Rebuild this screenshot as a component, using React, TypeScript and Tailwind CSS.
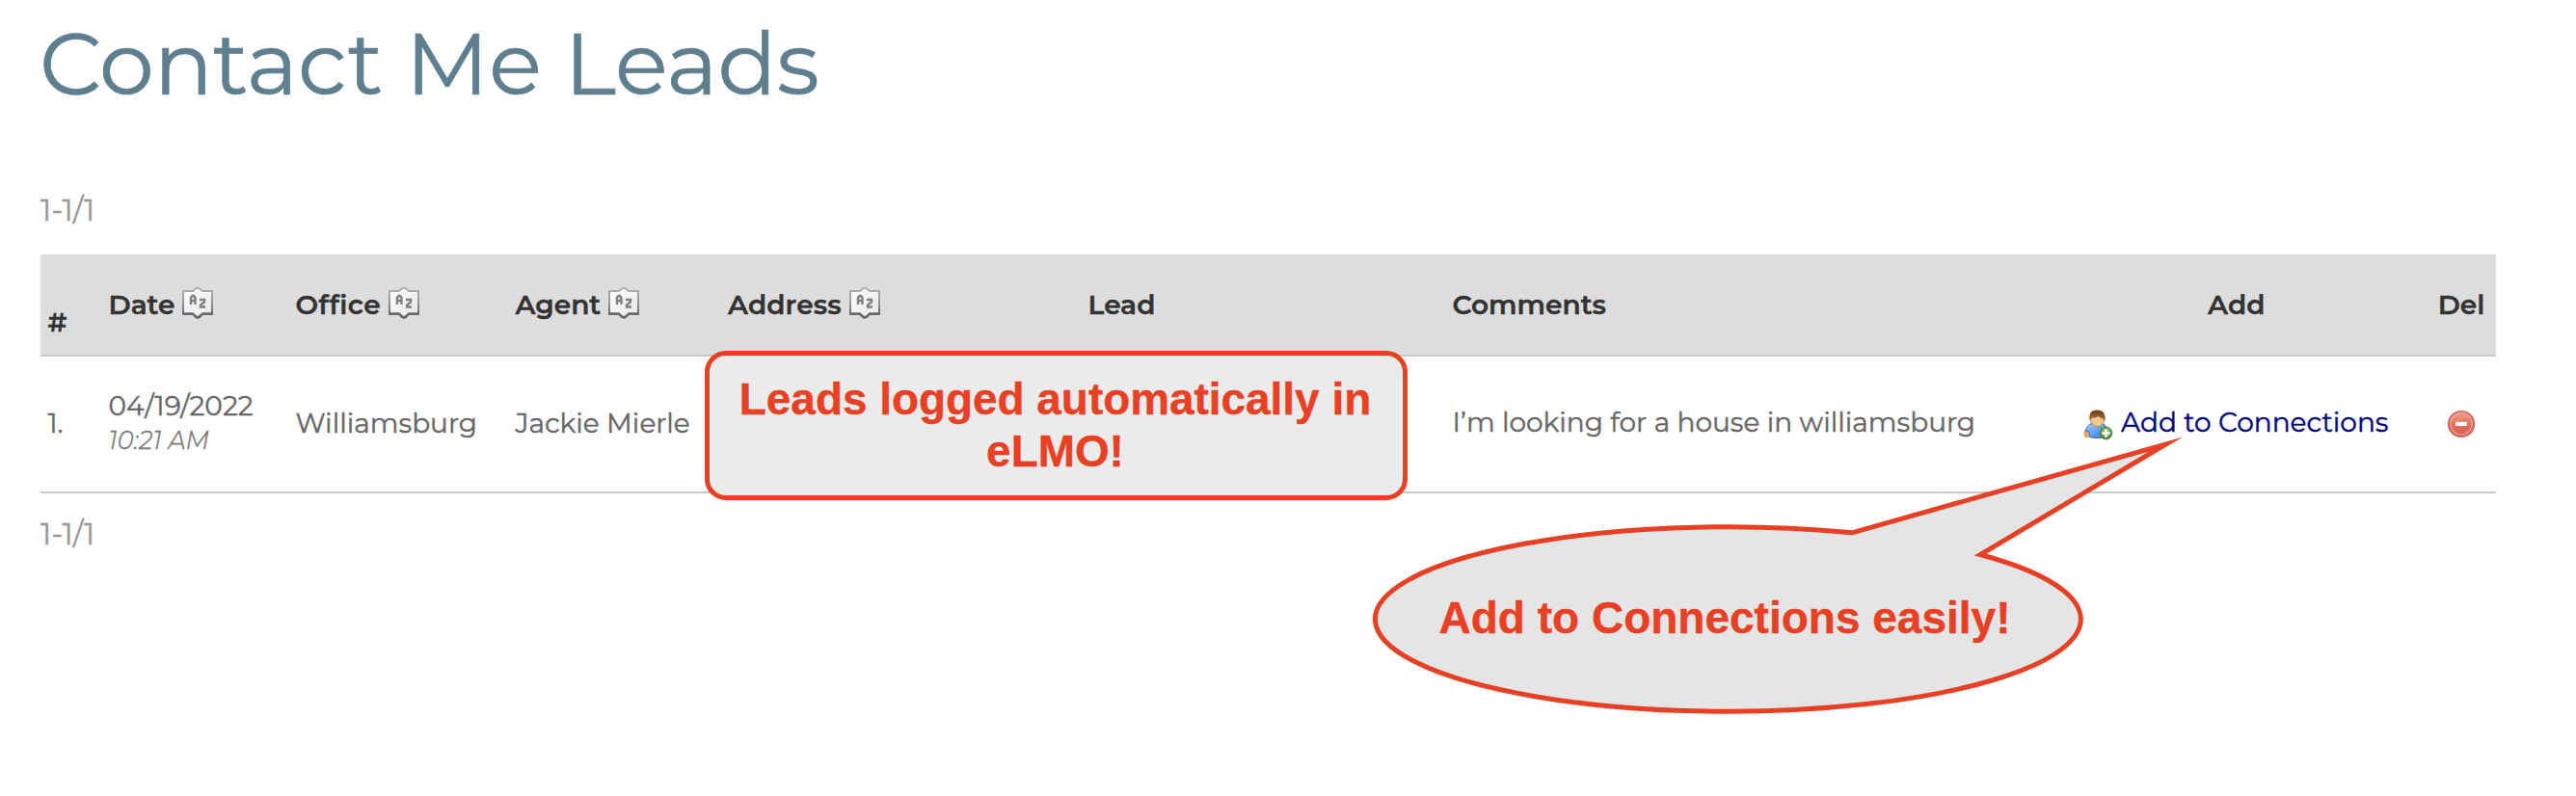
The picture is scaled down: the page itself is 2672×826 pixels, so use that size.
import React from "react";

function SortIcon() {
  return (
    <svg width="32" height="34" viewBox="0 0 32 34" className="ml-2 mt-[2px] block shrink-0">
      <defs>
        <linearGradient id="sortEdge" x1="0" y1="0" x2="0" y2="1">
          <stop offset="0" stopColor="#b0b0b0" />
          <stop offset="0.5" stopColor="#969696" />
          <stop offset="1" stopColor="#5c5c5c" />
        </linearGradient>
        <linearGradient id="sortFill" x1="0" y1="0" x2="1" y2="1">
          <stop offset="0" stopColor="#ffffff" />
          <stop offset="1" stopColor="#e6e6e6" />
        </linearGradient>
      </defs>
      <path
        d="M1 4H11L14 1.5Q16 0 18 1.5L21 4H31V28H21L18 31Q16 32.5 14 31L11 28H1Z"
        fill="url(#sortFill)"
        stroke="url(#sortEdge)"
        strokeWidth="2"
      />
      <path d="M2 27H11L14 29.8Q16 31.2 18 29.8L21 27H30" fill="none" stroke="#6a6a6a" strokeWidth="1.5" />
      <path d="M9 18V11L10.5 9H12L13.5 11V18M9 14H13.5" fill="none" stroke="#808080" strokeWidth="2.4" />
      <path d="M18 13H23V15.5L19 18.5V20.5H24" fill="none" stroke="#808080" strokeWidth="2.4" />
    </svg>
  );
}

function UserAddIcon() {
  return (
    <svg width="32" height="32" viewBox="0 0 32 32" className="mr-[7px] block shrink-0">
      <defs>
        <linearGradient id="shirt" x1="0" y1="0" x2="1" y2="1">
          <stop offset="0" stopColor="#a9cdfb" />
          <stop offset="0.55" stopColor="#5c9bee" />
          <stop offset="1" stopColor="#3a6fca" />
        </linearGradient>
        <linearGradient id="hair" x1="0" y1="0" x2="0" y2="1">
          <stop offset="0" stopColor="#6e4019" />
          <stop offset="1" stopColor="#a8703a" />
        </linearGradient>
        <radialGradient id="plus" cx="0.5" cy="0.35" r="0.7">
          <stop offset="0" stopColor="#a5cf85" />
          <stop offset="0.6" stopColor="#68a048" />
          <stop offset="1" stopColor="#3d7424" />
        </radialGradient>
      </defs>
      <ellipse cx="3.5" cy="25" rx="3" ry="4.2" fill="#e5a55f" />
      <path d="M2 22Q4 15.5 9 14.5H19Q25 16 26 23V27Q21 30.500 14 29.500Q8 29.500 6.500 28.500L6 23Z" fill="url(#shirt)" stroke="#4674c6" strokeWidth="1" />
      <ellipse cx="14.500" cy="11" rx="6.800" ry="6.800" fill="#f0c796" stroke="#b98046" strokeWidth="1" />
      <path d="M6.500 11Q5.500 3.500 9.500 1.500Q14.500 -0.500 19 1.500Q23.500 4 22.500 12L20.500 9.500Q17.500 8.500 15.500 7Q12.500 9 9 8.500Z" fill="url(#hair)" />
      <circle cx="23.500" cy="24.500" r="6.300" fill="url(#plus)" stroke="#4b8232" strokeWidth="1" />
      <path d="M23.500 20.500V28.500M19.500 24.500H27.500" stroke="#ffffff" strokeWidth="2.600" />
    </svg>
  );
}

function DeleteIcon() {
  return (
    <svg width="30" height="30" viewBox="0 0 30 30" className="block shrink-0">
      <defs>
        <linearGradient id="del" x1="0" y1="0" x2="0" y2="1">
          <stop offset="0" stopColor="#eea58c" />
          <stop offset="0.5" stopColor="#e0705a" />
          <stop offset="1" stopColor="#d8584c" />
        </linearGradient>
      </defs>
      <circle cx="15" cy="15" r="13.300" fill="url(#del)" stroke="#d0675f" strokeWidth="1.600" />
      <circle cx="15" cy="15" r="11" fill="none" stroke="#eda698" strokeWidth="1.200" />
      <rect x="9" y="12.800" width="12" height="4.200" fill="#ffffff" />
    </svg>
  );
}

const columns =
  "grid grid-cols-[63px_194px_228px_220.5px_373.5px_378px_615px_395.5px_72px] w-[2547px] pl-[7.5px] text-[28px] leading-[40px] border-b-2 border-[#c9c9c9]";

function SortHead({ label, className = "" }: { label: string; className?: string }) {
  return (
    <div className="flex items-start">
      <span className={className}>{label}</span>
      <SortIcon />
    </div>
  );
}

function Count({ className }: { className: string }) {
  return <div className={`text-[31.5px] leading-[40px] tracking-[-0.2px] text-[#999] ${className}`}>1-1/1</div>;
}

export default function App() {
  return (
    <div className="relative h-[826px] w-[2672px] overflow-hidden bg-white font-['Montserrat','Inter',sans-serif] [font-variant-ligatures:none] [-webkit-text-stroke-width:0.4px]">
      <main className="pl-[42px] pt-4">
        <h1 className="-ml-px text-[90.4px] leading-[100px] text-[#5f7f8f] [-webkit-text-stroke-width:0.7px]">Contact Me Leads</h1>
        <Count className="mt-[82px]" />

        <div className="mt-[26px]">
          <div className={`${columns} h-[106px] bg-[#ddd] pt-8 font-semibold text-[#333]`}>
            <div className="pt-[18px]">#</div>
            <SortHead label="Date" />
            <SortHead label="Office" className="tracking-[0.45px]" />
            <SortHead label="Agent" />
            <SortHead label="Address" className="tracking-[0.1px]" />
            <div>Lead</div>
            <div>Comments</div>
            <div className="pl-px text-center">Add</div>
            <div className="text-center">Del</div>
          </div>

          <div className={`${columns} h-[142px] pt-[49px] text-[#666]`}>
            <div>1.</div>
            <div className="-mt-[18px]">
              <div>04/19/2022</div>
              <div className="text-[25.6px] font-light italic leading-[32px] tracking-[0.15px] text-[#777]">10:21 AM</div>
            </div>
            <div>Williamsburg</div>
            <div>Jackie Mierle</div>
            <div />
            <div />
            <div className="-mt-px whitespace-nowrap">I’m looking for a house in williamsburg</div>
            <div className="-mt-px flex items-start justify-center text-[#000080]">
              <div className="mt-[7px]">
                <UserAddIcon />
              </div>
              <span>Add to Connections</span>
            </div>
            <div className="mt-[6px] flex items-start justify-center">
              <DeleteIcon />
            </div>
          </div>
        </div>

        <Count className="mt-[22px]" />
      </main>

      <div className="absolute left-[731px] top-[364px] h-[155px] w-[729px] rounded-[22px] border-[5px] border-[#e84025] bg-[#ebebeb] pr-[2px] pt-[17.5px] text-center font-['Liberation_Sans',Arial,sans-serif] text-[45.9px] font-bold leading-[54px] text-[#e84025]">
        Leads logged automatically in
        <br />
        eLMO!
      </div>

      <div className="absolute left-[1400px] top-[440px] h-[310px] w-[880px]">
        <svg width="880" height="310" viewBox="1400 440 880 310" className="absolute inset-0">
          <path
            d="M1920 552.800L2245.500 461L2053 575.500A366 95.800 0 1 1 1920 552.800Z"
            transform="translate(1 0)"
            fill="#e5e5e5"
            stroke="#e84025"
            strokeWidth="5"
            strokeMiterlimit="20"
          />
        </svg>
        <div className="relative w-[778px] pt-[174px] text-center font-['Liberation_Sans',Arial,sans-serif] text-[46px] font-bold leading-[54px] text-[#e84025]">
          Add to Connections easily!
        </div>
      </div>
    </div>
  );
}
